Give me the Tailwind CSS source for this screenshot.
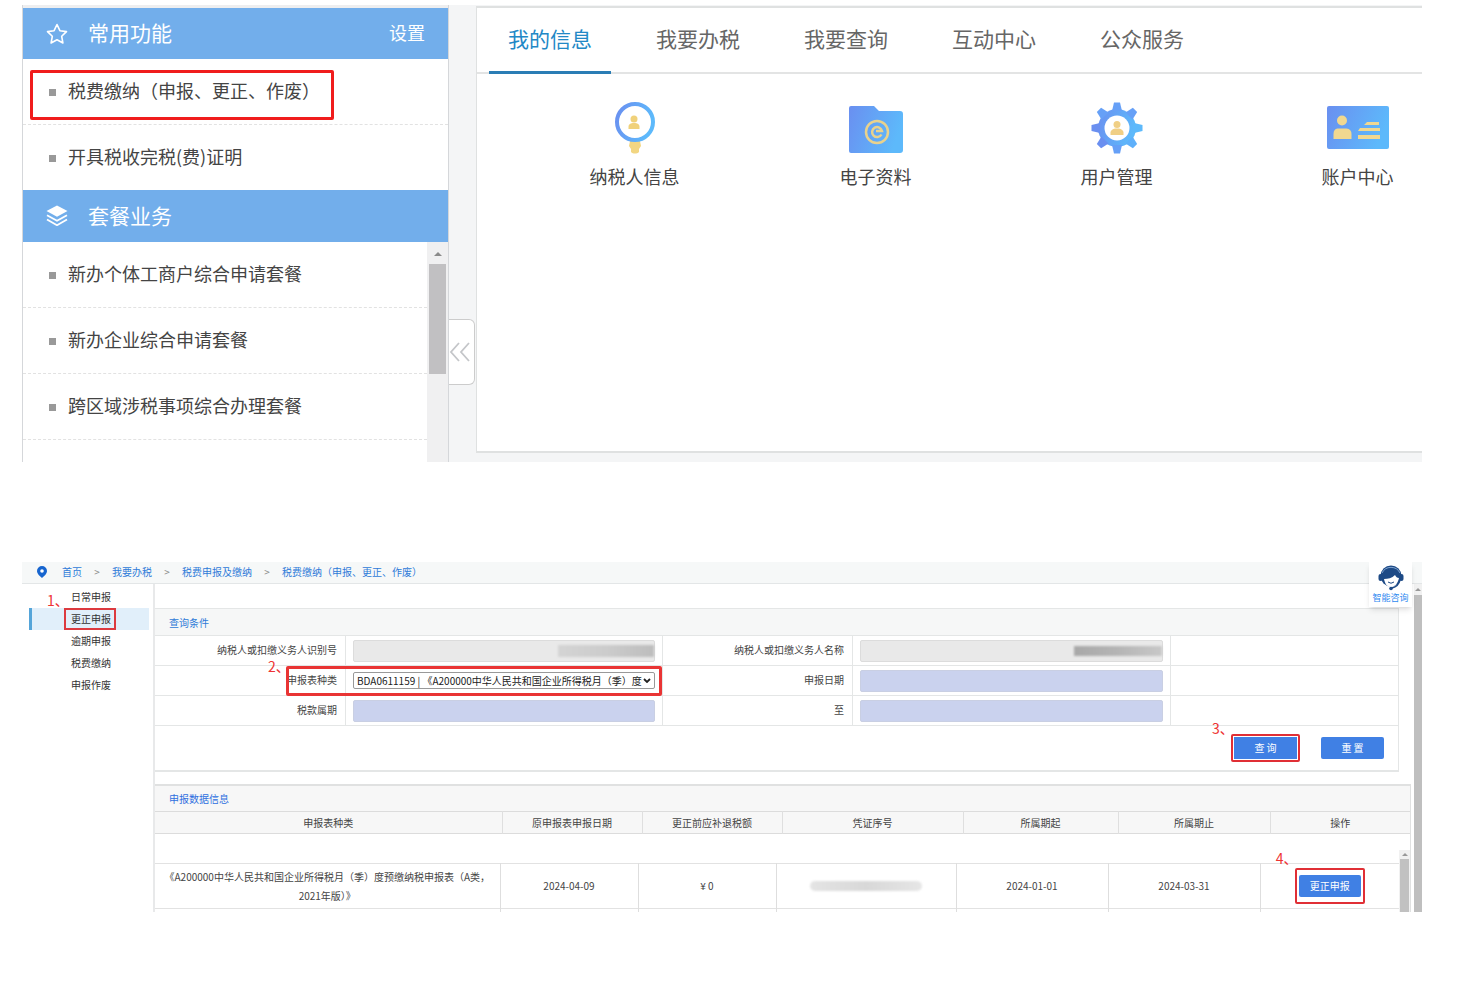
<!DOCTYPE html>
<html lang="zh-CN">
<head>
  <meta charset="UTF-8" />
  <meta name="viewport" content="width=device-width, initial-scale=1.0"/>
  <title>电子税务局</title>
  <script src="https://cdn.jsdelivr.net/npm/@tailwindcss/browser@4"></script>
</head>
<body class="bg-white pt-[5px] pr-9 pl-[22px] font-['Noto_Sans_CJK_SC',sans-serif] text-[#444]">

  <!-- Portal home -->
  <section class="flex h-[457px] overflow-hidden bg-[#f4f5f6]">

    <!-- Left menu -->
    <aside class="w-[427px] shrink-0 border-x border-[#d5d7da] bg-white">
      <div class="h-[3px] bg-[#eeeeef]"></div>
      <div class="flex h-[51px] items-center bg-[#72aeeb] px-[23px] text-white">
        <svg class="mr-5 h-[22px] w-[22px]" viewBox="0 0 22 22" fill="none" stroke="currentColor" stroke-width="1.6" stroke-linejoin="round"><path d="M11 1.5l2.9 6.2 6.6.9-4.8 4.7 1.2 6.7L11 16.8 5.1 20l1.2-6.7L1.5 8.6l6.6-.9z"/></svg>
        <h2 class="pb-[3px] text-[21px] leading-6">常用功能</h2>
        <a href="#" class="ml-auto pb-[3px] text-lg leading-6">设置</a>
      </div>
      <ul class="text-lg leading-6">
        <li class="relative flex h-[66px] items-center border-b border-dashed border-[#e2e2e2] pl-[26px]">
          <span class="mt-0.5 mr-3 h-[7px] w-[7px] bg-[#999]"></span>
          <a href="#" class="pb-[3px]">税费缴纳（申报、更正、作废）</a>
          <span class="absolute top-[11px] left-[7px] h-[50px] w-[304px] rounded-xs border-3 border-[#f01c1c]"></span>
        </li>
        <li class="flex h-[65px] items-center pl-[26px]">
          <span class="mt-0.5 mr-3 h-[7px] w-[7px] bg-[#999]"></span>
          <a href="#" class="pb-[3px]">开具税收完税(费)证明</a>
        </li>
      </ul>

      <div class="flex h-[52px] items-center bg-[#72aeeb] px-[23px] text-white">
        <svg class="mr-5 h-[22px] w-[22px]" viewBox="0 0 22 22" fill="none" stroke="currentColor" stroke-width="1.8" stroke-linejoin="round"><path fill="currentColor" stroke="none" d="M11 0.500L21.500 6 11 11.800 0.500 6z"/><path d="M1 10.200l10 5.600 10-5.600M1 14.500l10 5.700 10-5.700"/></svg>
        <h2 class="pb-[3px] text-[21px] leading-6">套餐业务</h2>
      </div>
      <div class="flex h-[220px]">
        <ul class="flex-1 overflow-hidden text-lg leading-6">
          <li class="flex h-[66px] items-center border-b border-dashed border-[#e2e2e2] pl-[26px]">
            <span class="mt-0.5 mr-3 h-[7px] w-[7px] bg-[#999]"></span>
            <a href="#" class="pb-[3px]">新办个体工商户综合申请套餐</a>
          </li>
          <li class="flex h-[66px] items-center border-b border-dashed border-[#e2e2e2] pl-[26px]">
            <span class="mt-0.5 mr-3 h-[7px] w-[7px] bg-[#999]"></span>
            <a href="#" class="pb-[3px]">新办企业综合申请套餐</a>
          </li>
          <li class="flex h-[66px] items-center border-b border-dashed border-[#e2e2e2] pl-[26px]">
            <span class="mt-0.5 mr-3 h-[7px] w-[7px] bg-[#999]"></span>
            <a href="#" class="pb-[3px]">跨区域涉税事项综合办理套餐</a>
          </li>
        </ul>
        <div class="flex w-[21px] flex-col items-center bg-[#f0f0f1]">
          <svg class="mt-2.5 mb-2 h-1 w-2" viewBox="0 0 8 4" fill="#8a8a8a"><path d="M4 0l4 4H0z"/></svg>
          <div class="h-[110px] w-[17px] bg-[#c1c0c2]"></div>
        </div>
      </div>
    </aside>

    <!-- Collapse handle -->
    <div class="w-[27px] shrink-0 pt-[314px]">
      <button type="button" aria-label="收起" class="flex h-[66px] w-[26px] items-center rounded-r-md border border-l-0 border-[#ccc] bg-white">
        <svg class="h-5 w-[22px]" viewBox="0 0 22 20" fill="none" stroke="#c4c6c9" stroke-width="1.8"><path d="M10 1L2 10l8 9M20 1l-8 9 8 9"/></svg>
      </button>
    </div>

    <!-- Tabs and shortcuts -->
    <div class="mt-px mb-[9px] min-w-0 flex-1 border-y-2 border-l border-[#dfe1e1] bg-white">
      <nav class="flex h-[66px] gap-[26px] border-b-2 border-[#e3e4e4] pl-3 text-[21px] text-[#666]">
        <a href="#" class="h-[66px] w-[122px] border-b-3 border-[#2a7db5] pt-3.5 text-center leading-8 text-[#2288c6]">我的信息</a>
        <a href="#" class="w-[122px] pt-3.5 text-center leading-8">我要办税</a>
        <a href="#" class="w-[122px] pt-3.5 text-center leading-8">我要查询</a>
        <a href="#" class="w-[122px] pt-3.5 text-center leading-8">互动中心</a>
        <a href="#" class="w-[122px] pt-3.5 text-center leading-8">公众服务</a>
      </nav>
      <div class="flex overflow-hidden pt-[26px] pl-[37px] text-lg leading-6">
        <a href="#" class="flex w-[241px] shrink-0 flex-col items-center gap-2">
          <svg class="h-14 w-16" viewBox="0 0 64 56">
            <defs><linearGradient id="g" x1="0" y1="0" x2="1" y2="0.300"><stop offset="0" stop-color="#6a8ff0"/><stop offset="1" stop-color="#5db9fb"/></linearGradient></defs>
            <path d="M27 41h10l1 5-2 3v3c-2 2-6 2-8 0v-3l-2-3z" fill="#f2d682"/>
            <circle cx="32" cy="22" r="18" fill="#fff" stroke="url(#g)" stroke-width="4"/>
            <circle cx="31" cy="19" r="3.500" fill="#f0d17a"/><path d="M25.500 29v-2c0-3 2-4 5.500-4s5.500 1 5.500 4v2z" fill="#f0d17a"/>
          </svg>
          <span>纳税人信息</span>
        </a>
        <a href="#" class="flex w-[241px] shrink-0 flex-col items-center gap-2">
          <svg class="h-14 w-16" viewBox="0 0 64 56">
            <path d="M5 8q0-2 2-2h23l5 5h21q3 0 3 3v36q0 3-3 3H7q-2 0-2-2z" fill="url(#g)"/>
            <circle cx="33" cy="32" r="11" fill="none" stroke="#e9d28d" stroke-width="2.500"/>
            <path d="M37.500 34.500a5 5 0 1 1 .500-3.500h-6" fill="none" stroke="#e9d28d" stroke-width="2.500"/>
          </svg>
          <span>电子资料</span>
        </a>
        <a href="#" class="flex w-[241px] shrink-0 flex-col items-center gap-2">
          <svg class="h-14 w-16" viewBox="0 0 64 56">
            <g transform="translate(32 28)">
              <circle r="19" fill="url(#g)"/>
              <g fill="#66a0f7">
                <path d="M-5-17l2-8.500h6l2 8.500z"/><path d="M-5-17l2-8.500h6l2 8.500z" transform="rotate(45)"/>
                <path d="M-5-17l2-8.500h6l2 8.500z" transform="rotate(90)" fill="#5db9fb"/><path d="M-5-17l2-8.500h6l2 8.500z" transform="rotate(135)" fill="#5fb0fa"/>
                <path d="M-5-17l2-8.500h6l2 8.500z" transform="rotate(180)"/><path d="M-5-17l2-8.500h6l2 8.500z" transform="rotate(225)" fill="#6a8ff0"/>
                <path d="M-5-17l2-8.500h6l2 8.500z" transform="rotate(270)" fill="#6a8ff0"/><path d="M-5-17l2-8.500h6l2 8.500z" transform="rotate(315)"/>
              </g>
              <circle r="12.500" fill="#fff"/>
              <circle cy="-3.500" r="3.500" fill="#f0cf85"/><path d="M-6.500 7V4q1-3 4.500-3.500h4Q5.500 1 6.500 4v3z" fill="#f0cf85"/>
            </g>
          </svg>
          <span>用户管理</span>
        </a>
        <a href="#" class="flex w-[241px] shrink-0 flex-col items-center gap-2">
          <svg class="h-14 w-16" viewBox="0 0 64 56">
            <rect x="1" y="6" width="62" height="43" rx="2" fill="url(#g)"/>
            <g fill="#f1d890"><circle cx="16" cy="20.500" r="5"/><path d="M7.500 39v-5q0-5 4-5.500h9q5 .5 5 5.500v5z"/>
            <path d="M41 22h12v3H38zM34 28h20v3H32zM32 35h22v4H32z"/></g>
          </svg>
          <span>账户中心</span>
        </a>
      </div>
    </div>
  </section>

  <!-- Declaration correction -->
  <section class="relative mt-[100px] h-[350px] overflow-hidden text-[10px] leading-4">

    <nav class="flex h-[22px] items-center border-b border-[#e3e6e7] bg-[#f6f8f8] pb-0.5 pl-[14px] text-[#2f7bd8]">
      <svg class="mr-[14px] h-3 w-3" viewBox="0 0 12 12"><path d="M6 0a5 5 0 0 1 5 5c0 3-3 5-5 7-2-2-5-4-5-7a5 5 0 0 1 5-5z" fill="#1765cf"/><circle cx="6" cy="5" r="1.800" fill="#fff"/></svg>
      <a href="#">首页</a>
      <span class="w-[30px] text-center text-[#888]">&gt;</span>
      <a href="#">我要办税</a>
      <span class="w-[30px] text-center text-[#888]">&gt;</span>
      <a href="#">税费申报及缴纳</a>
      <span class="w-[30px] text-center text-[#888]">&gt;</span>
      <a href="#">税费缴纳（申报、更正、作废）</a>
    </nav>

    <div class="flex h-[328px]">
      <ul class="w-[131px] shrink-0 pt-0.5 pr-1 pl-[7px] leading-[22px] text-[#333]">
        <li><a href="#" class="block border-l-3 border-transparent pl-[39px]">日常申报</a></li>
        <li class="relative">
          <a href="#" class="block border-l-3 border-[#55a5d9] bg-[#e1effa] pl-[39px]">更正申报</a>
          <span class="absolute top-0 left-[35px] h-[22px] w-[52px] border-2 border-[#dc3a3f]"></span>
          <span class="absolute -top-4 left-[18px] text-sm leading-4 text-[#ee3333]">1、</span>
        </li>
        <li><a href="#" class="block border-l-3 border-transparent pl-[39px]">逾期申报</a></li>
        <li><a href="#" class="block border-l-3 border-transparent pl-[39px]">税费缴纳</a></li>
        <li><a href="#" class="block border-l-3 border-transparent pl-[39px]">申报作废</a></li>
      </ul>

      <div class="min-w-0 flex-1 border-l-2 border-[#e8e9ea] pt-6">

        <!-- Query form -->
        <form class="mr-[15px] border-t border-r border-b-2 border-[#e4e6e6]">
          <h3 class="h-[27px] border-b border-[#e4e6e6] bg-[#f6f7f7] pl-[14px] leading-7 text-[#2f7bd8]">查询条件</h3>
          <div class="grid auto-rows-[30px] grid-cols-[191px_317px_190px_318px_1fr]">
            <label for="taxId" class="border-r border-b border-[#e4e6e6] pr-2 text-right leading-7">纳税人或扣缴义务人识别号</label>
            <div class="relative border-r border-b border-[#e4e6e6] px-[7px] py-1">
              <input id="taxId" type="text" disabled class="block h-[22px] w-full rounded-xs border border-[#dcdcdc] bg-[#e9e9e9]" />
              <span class="absolute top-[9px] right-2 h-3 w-24 bg-linear-to-r from-[#d4d4d4] via-[#cccccc] to-[#bdbdbd] blur-[1px]"></span>
            </div>
            <label for="taxName" class="border-r border-b border-[#e4e6e6] pr-2 text-right leading-7">纳税人或扣缴义务人名称</label>
            <div class="relative border-r border-b border-[#e4e6e6] px-[7px] py-1">
              <input id="taxName" type="text" disabled class="block h-[22px] w-full rounded-xs border border-[#dcdcdc] bg-[#e9e9e9]" />
              <span class="absolute top-[10px] right-2 h-2.5 w-[88px] bg-linear-to-r from-[#a8a8a8] via-[#b5b5b5] to-[#c8c8c8] blur-[1px]"></span>
            </div>
            <div class="border-b border-[#e4e6e6]"></div>

            <div class="relative border-r border-b border-[#e4e6e6] pr-2 text-right leading-7">
              <label for="formType">申报表种类</label>
              <span class="absolute top-0 left-[131px] z-10 h-[30px] w-[376px] rounded-xs border-3 border-[#e93434]"></span>
              <span class="absolute -top-2 left-[113px] text-sm leading-4 text-[#ee3333]">2、</span>
            </div>
            <div class="relative border-r border-b border-[#e4e6e6] px-[7px] pt-1.5">
              <select id="formType" class="block h-[17px] w-full appearance-none overflow-hidden rounded-xs border border-[#999] bg-white pr-3 pl-[3px] text-[10px] leading-[15px] text-[#222]">
                <option>BDA0611159 | 《A200000中华人民共和国企业所得税月（季）度预缴纳税申报表</option>
              </select>
              <svg class="absolute top-3 right-[11px] h-[5px] w-2" viewBox="0 0 8 5" fill="none" stroke="#222" stroke-width="1.800"><path d="M1 1l3 3 3-3"/></svg>
            </div>
            <label for="reportDate" class="border-r border-b border-[#e4e6e6] pr-2 text-right leading-7">申报日期</label>
            <div class="border-r border-b border-[#e4e6e6] px-[7px] py-1">
              <input id="reportDate" type="text" class="block h-[22px] w-full rounded-xs border border-[#c9cfe3] bg-[#cad2ee]" />
            </div>
            <div class="border-b border-[#e4e6e6]"></div>

            <label for="periodStart" class="border-r border-b border-[#e4e6e6] pr-2 text-right leading-7">税款属期</label>
            <div class="border-r border-b border-[#e4e6e6] px-[7px] py-1">
              <input id="periodStart" type="text" class="block h-[22px] w-full rounded-xs border border-[#c9cfe3] bg-[#cad2ee]" />
            </div>
            <label for="periodEnd" class="border-r border-b border-[#e4e6e6] pr-2 text-right leading-7">至</label>
            <div class="border-r border-b border-[#e4e6e6] px-[7px] py-1">
              <input id="periodEnd" type="text" class="block h-[22px] w-full rounded-xs border border-[#c9cfe3] bg-[#cad2ee]" />
            </div>
            <div class="border-b border-[#e4e6e6]"></div>
          </div>
          <div class="flex h-11 items-center justify-end gap-6 pr-[14px] text-white">
            <div class="relative">
              <button type="button" class="block h-[22px] w-[63px] bg-[#4080e4]">查 询</button>
              <span class="absolute -inset-[3px] rounded-xs border-2 border-[#e02f35]"></span>
              <span class="absolute -top-[17px] -left-[22px] text-sm leading-4 text-[#ee3333]">3、</span>
            </div>
            <button type="button" class="h-[22px] w-[63px] rounded-xs bg-[#4080e4]">重 置</button>
          </div>
        </form>

        <!-- Declaration list -->
        <div class="mt-3 mr-[3px] border-t-2 border-r border-[#e0e1e1]">
          <h3 class="h-[25px] bg-[#f7f7f7] pl-[14px] leading-[25px] text-[#2f6fe0]">申报数据信息</h3>
          <table class="w-full table-fixed border-collapse bg-[#f7f7f7]">
            <colgroup><col><col class="w-[140px]"><col class="w-[140px]"><col class="w-[181px]"><col class="w-[155px]"><col class="w-[152px]"><col class="w-[140px]"></colgroup>
            <thead>
              <tr class="h-[22px] border-y border-[#dcdcdc]">
                <th class="border-r border-[#dfdfdf] p-0 font-normal">申报表种类</th>
                <th class="border-r border-[#dfdfdf] p-0 font-normal">原申报表申报日期</th>
                <th class="border-r border-[#dfdfdf] p-0 font-normal">更正前应补退税额</th>
                <th class="border-r border-[#dfdfdf] p-0 font-normal">凭证序号</th>
                <th class="border-r border-[#dfdfdf] p-0 font-normal">所属期起</th>
                <th class="border-r border-[#dfdfdf] p-0 font-normal">所属期止</th>
                <th class="p-0 font-normal">操作</th>
              </tr>
            </thead>
          </table>
          <div class="flex h-20">
            <div class="flex-1 pt-[29px]">
              <table class="w-full table-fixed border-collapse text-center">
                <colgroup><col><col class="w-[138px]"><col class="w-[138px]"><col class="w-[180px]"><col class="w-[152px]"><col class="w-[152px]"><col class="w-[139px]"></colgroup>
                <tbody>
                  <tr class="h-[45px] border-y border-[#e2e2e2]">
                    <td class="border-r border-[#dedede] px-2 py-0 leading-[19px]">《A200000中华人民共和国企业所得税月（季）度预缴纳税申报表（A类，2021年版）》</td>
                    <td class="border-r border-[#dedede] p-0">2024-04-09</td>
                    <td class="border-r border-[#dedede] p-0">¥ 0</td>
                    <td class="border-r border-[#dedede] p-0"><span class="mx-auto block h-2.5 w-28 rounded-full bg-linear-to-r from-[#e4e4e4] via-[#d8d8d8] to-[#e6e6e6] blur-[1px]"></span></td>
                    <td class="border-r border-[#dedede] p-0">2024-01-01</td>
                    <td class="border-r border-[#dedede] p-0">2024-03-31</td>
                    <td class="p-0">
                      <div class="relative mx-auto w-[62px]">
                        <button type="button" class="block h-[22px] w-full rounded-xs bg-[#4080e4] text-white">更正申报</button>
                        <span class="absolute -inset-x-1 -inset-y-[7px] rounded-xs border-2 border-[#e02f35]"></span>
                        <span class="absolute -top-[25px] -left-[23px] text-sm leading-4 text-[#ee3333]">4、</span>
                      </div>
                    </td>
                  </tr>
                  <tr class="h-5">
                    <td class="border-r border-[#dedede]"></td><td class="border-r border-[#dedede]"></td><td class="border-r border-[#dedede]"></td><td class="border-r border-[#dedede]"></td><td class="border-r border-[#dedede]"></td><td class="border-r border-[#dedede]"></td><td></td>
                  </tr>
                </tbody>
              </table>
            </div>
            <div class="mt-4 flex w-[11px] flex-col items-center bg-[#f1f1f1]">
              <svg class="my-[3px] h-[3px] w-1.5 shrink-0" viewBox="0 0 6 3" fill="#999"><path d="M3 0l3 3H0z"/></svg>
              <div class="w-[9px] flex-1 bg-[#c1c1c1]"></div>
            </div>
          </div>
        </div>
      </div>

      <!-- Page scrollbar -->
      <div class="flex w-2 shrink-0 flex-col items-center bg-[#f1f1f1]">
        <svg class="my-1 h-[3px] w-1.5 shrink-0" viewBox="0 0 6 3" fill="#999"><path d="M3 0l3 3H0z"/></svg>
        <div class="w-full flex-1 bg-[#bfbfbf]"></div>
      </div>
    </div>

    <!-- Assistant -->
    <a href="#" class="absolute top-0 right-[10px] flex h-[45px] w-[43px] flex-col items-center bg-white pt-0.5 text-[#2f8af0] shadow-md">
      <svg class="h-[27px] w-[26px] shrink-0" viewBox="0 0 26 27">
        <circle cx="13" cy="12" r="10.500" fill="#1d4a86"/>
        <rect x="0.500" y="10" width="4" height="7" rx="2" fill="#1d4a86"/><rect x="21.500" y="10" width="4" height="7" rx="2" fill="#1d4a86"/>
        <path d="M4 9a10 10 0 0 1 18 0" fill="none" stroke="#7fa4d0" stroke-width="1"/>
        <path d="M6 15c4 0 8-1 11-4 1 2 2 3 4 3-1 5-4 9-8 9s-6-3-7-8z" fill="#fff"/>
        <path d="M22 16c-1 4-4 7-8 8" fill="none" stroke="#1d4a86" stroke-width="1.500"/>
        <circle cx="13" cy="24.500" r="1.800" fill="#1d4a86"/><path d="M10 18q3 2.500 6 0" fill="none" stroke="#1d4a86"/>
      </svg>
      <span class="text-[9px] leading-[14px] whitespace-nowrap">智能咨询</span>
    </a>
  </section>

</body>
</html>
